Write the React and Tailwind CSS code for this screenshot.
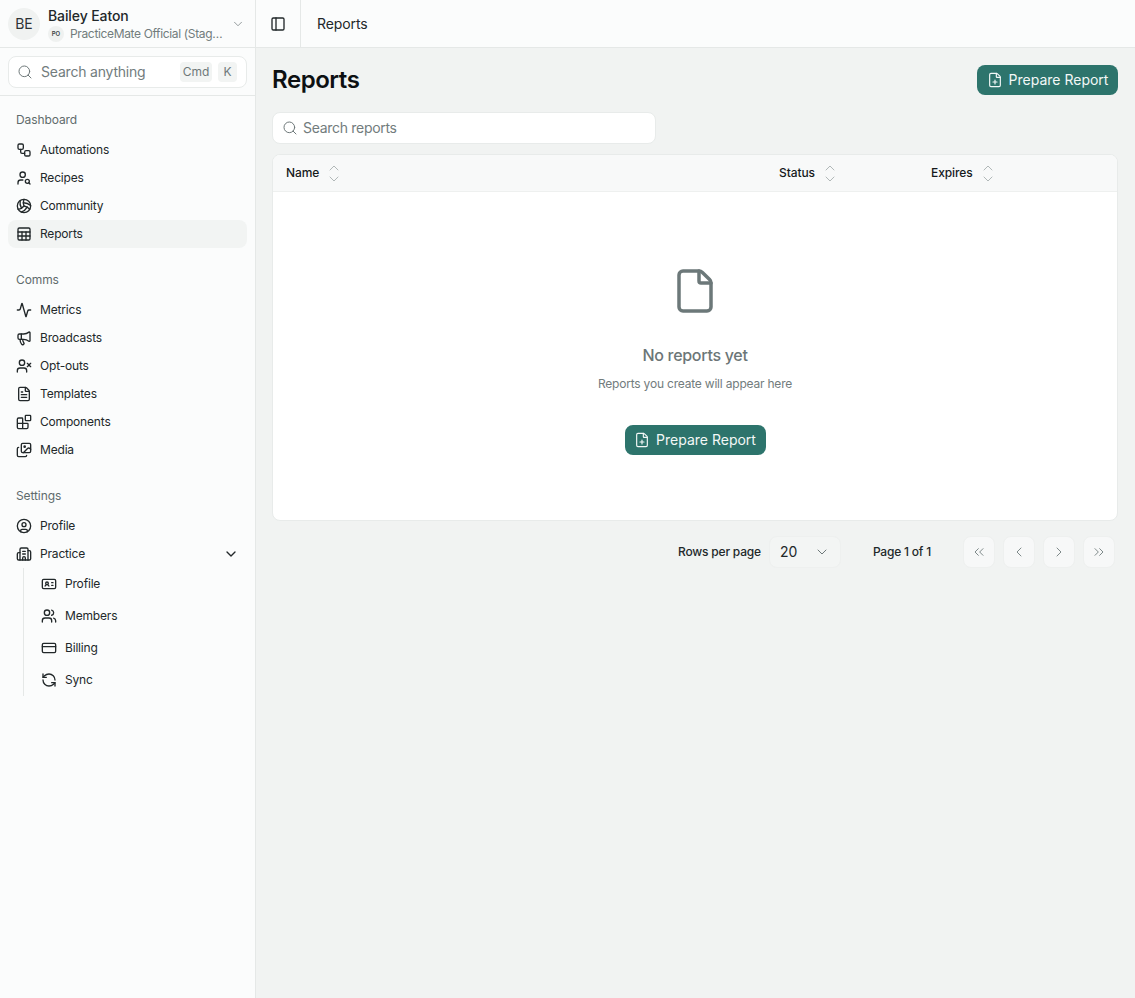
import React from 'react';
import {
  Workflow, UserSearch, Volleyball, Sheet, Activity, Megaphone, UserX, FileText, Blocks, Images,
  CircleUser, Building2, IdCard, Users, CreditCard, RefreshCcw, PanelLeft, ChevronDown, ChevronUp,
  Search, FilePlus, File, ChevronsLeft, ChevronsRight, ChevronLeft, ChevronRight,
} from 'lucide-react';

const dashboardItems = [
  { label: 'Automations', icon: Workflow },
  { label: 'Recipes', icon: UserSearch },
  { label: 'Community', icon: Volleyball },
  { label: 'Reports', icon: Sheet, active: true },
];

const commsItems = [
  { label: 'Metrics', icon: Activity },
  { label: 'Broadcasts', icon: Megaphone },
  { label: 'Opt-outs', icon: UserX },
  { label: 'Templates', icon: FileText },
  { label: 'Components', icon: Blocks },
  { label: 'Media', icon: Images },
];

const practiceItems = [
  { label: 'Profile', icon: IdCard },
  { label: 'Members', icon: Users },
  { label: 'Billing', icon: CreditCard },
  { label: 'Sync', icon: RefreshCcw },
];

const NavItem = ({ item, children }) => {
  const Icon = item.icon;
  return (
    <div className={`flex h-7 items-center gap-2 rounded-lg px-2 text-xs tracking-[-0.18px] text-[#22282a] ${item.active ? 'bg-[#f2f4f3]' : ''}`}>
      <Icon size={16} strokeWidth={2} className="shrink-0" />
      <span className="flex-1">{item.label}</span>
      {children}
    </div>
  );
};

const NavGroup = ({ title, items, className }) => (
  <div className={className}>
    <div className="flex h-7 items-center px-2 text-xs tracking-[-0.1px] text-[#5f6b6c]">{title}</div>
    <div className="mt-0.5">
      {items.map((item) => <NavItem key={item.label} item={item} />)}
    </div>
  </div>
);

const SortHeader = ({ label }) => (
  <div className="flex items-center gap-[7px] pl-[13px] text-xs font-medium tracking-[-0.1px] text-[#161a1c]">
    <span>{label}</span>
    <span className="flex flex-col text-[#a2abab]">
      <ChevronUp size={16} strokeWidth={1.25} className="-mb-[5px]" />
      <ChevronDown size={16} strokeWidth={1.25} />
    </span>
  </div>
);

const PrepareButton = () => (
  <button className="flex h-[30px] w-[141px] items-center justify-center gap-1.5 rounded-lg bg-[#2d746c] text-sm text-[#f3f8f7]">
    <FilePlus size={16} strokeWidth={1.75} />
    Prepare Report
  </button>
);

const PageButton = ({ icon: Icon }) => (
  <div className="flex size-8 items-center justify-center rounded-lg border border-[#eef0ef] bg-[#f7f8f8] text-[#7f8a8a]">
    <Icon size={16} strokeWidth={1.5} />
  </div>
);

export default function App() {
  return (
    <div className="flex min-h-[998px] bg-[#f1f3f2] text-[#161a1c] [font-family:Inter,sans-serif]">
      <aside className="w-[256px] shrink-0 border-r border-[#e5e8e7] bg-[#fbfcfc]">
        <div className="flex h-12 items-center gap-2 border-b border-[#e5e8e7] pr-2.5 pl-2">
          <div className="flex size-8 shrink-0 items-center justify-center rounded-full bg-[#f0f2f1] text-sm text-[#2d3335]">BE</div>
          <div className="mt-0.5 min-w-0 flex-1">
            <div className="text-sm leading-4 font-medium tracking-[-0.1px] text-[#22282a]">Bailey Eaton</div>
            <div className="mt-0.5 flex items-center gap-1.5 text-xs leading-4 tracking-[-0.35px] text-[#727c7d]">
              <span className="flex size-4 shrink-0 items-center justify-center rounded-full bg-[#eff1f0] text-[6px] font-semibold tracking-normal text-[#3b4345]">PO</span>
              <span className="whitespace-nowrap">PracticeMate Official (Stag…</span>
            </div>
          </div>
          <ChevronDown size={14} strokeWidth={1.25} className="shrink-0 text-[#6e7879]" />
        </div>
        <div className="border-b border-[#e5e8e7] px-2 pt-2 pb-[7px]">
          <div className="flex h-8 items-center rounded-lg border border-[#e8ebea] bg-white pr-[9px] pl-2">
            <Search size={16} strokeWidth={1.5} className="text-[#6e7879]" />
            <span className="flex-1 pl-2 text-sm tracking-[-0.2px] text-[#727c7d]">Search anything</span>
            <span className="flex h-5 w-8 items-center justify-center rounded bg-[#f2f4f3] text-xs text-[#6e7879]">Cmd</span>
            <span className="ml-1.5 flex h-5 w-[19px] items-center justify-center rounded bg-[#f2f4f3] text-xs text-[#6e7879]">K</span>
          </div>
        </div>
        <nav className="px-2 pt-2.5">
          <NavGroup title="Dashboard" items={dashboardItems} />
          <NavGroup title="Comms" items={commsItems} className="mt-[18px]" />
          <div className="mt-[18px]">
            <div className="flex h-7 items-center px-2 text-xs tracking-[-0.1px] text-[#5f6b6c]">Settings</div>
            <div className="mt-0.5">
              <NavItem item={{ label: 'Profile', icon: CircleUser }} />
              <NavItem item={{ label: 'Practice', icon: Building2 }}>
                <ChevronDown size={16} strokeWidth={2} />
              </NavItem>
              <div className="ml-[15px] border-l border-[#e5e8e7] pl-[17px]">
                {practiceItems.map((item) => {
                  const Icon = item.icon;
                  return (
                    <div key={item.label} className="flex h-8 items-center gap-2 text-xs tracking-[-0.18px] text-[#22282a]">
                      <Icon size={16} strokeWidth={2} className="shrink-0" />
                      <span>{item.label}</span>
                    </div>
                  );
                })}
              </div>
            </div>
          </div>
        </nav>
      </aside>

      <div className="min-w-0 flex-1">
        <header className="flex h-12 items-center border-b border-[#e5e8e7] bg-[#fbfcfc]">
          <div className="flex h-full w-[45px] items-center justify-center border-r border-[#e5e8e7]">
            <PanelLeft size={16} strokeWidth={2} className="text-[#22282a]" />
          </div>
          <span className="pl-4 text-sm tracking-[-0.1px] text-[#22282a]">Reports</span>
        </header>

        <main className="pt-[17px] pr-[17px] pl-4">
          <div className="flex h-[30px] items-center justify-between">
            <h1 className="text-2xl leading-8 font-semibold tracking-[-0.45px] text-[#0d1012]">Reports</h1>
            <PrepareButton />
          </div>

          <div className="mt-[17px] flex h-8 w-[384px] items-center gap-[5px] rounded-lg border border-[#e8ebea] bg-white pl-[9px]">
            <Search size={16} strokeWidth={1.5} className="text-[#6e7879]" />
            <span className="text-sm tracking-[-0.3px] text-[#727c7d]">Search reports</span>
          </div>

          <div className="mt-2.5 overflow-hidden rounded-lg border border-[#e8ebea] bg-white">
            <div className="grid h-[37px] grid-cols-[493px_152px_1fr] items-center border-b border-[#eef0ef] bg-[#f8f9f9]">
              <SortHeader label="Name" />
              <SortHeader label="Status" />
              <SortHeader label="Expires" />
            </div>
            <div className="flex h-[328px] flex-col items-center pt-[75px]">
              <File size={48} strokeWidth={1.75} className="text-[#6c7879]" />
              <div className="mt-7 text-base font-medium tracking-[-0.3px] text-[#6c7677]">No reports yet</div>
              <div className="mt-[9px] text-xs tracking-[-0.2px] text-[#727c7d]">Reports you create will appear here</div>
              <div className="mt-[33px]"><PrepareButton /></div>
            </div>
          </div>

          <div className="mt-[15px] flex items-center pr-[3px]">
            <div className="ml-auto flex items-center">
              <span className="text-xs font-medium tracking-[-0.2px] text-[#22282a]">Rows per page</span>
              <div className="ml-2 flex h-8 w-[72px] items-center justify-between rounded-lg border border-[#eef0ef] bg-[#f3f5f4] px-2.5 text-sm text-[#22282a]">
                20
                <ChevronDown size={16} strokeWidth={1.5} className="text-[#6e7879]" />
              </div>
              <span className="ml-8 text-xs font-medium tracking-[-0.2px] text-[#22282a]">Page 1 of 1</span>
              <div className="ml-8 flex gap-2">
                <PageButton icon={ChevronsLeft} />
                <PageButton icon={ChevronLeft} />
                <PageButton icon={ChevronRight} />
                <PageButton icon={ChevronsRight} />
              </div>
            </div>
          </div>
        </main>
      </div>
    </div>
  );
}
